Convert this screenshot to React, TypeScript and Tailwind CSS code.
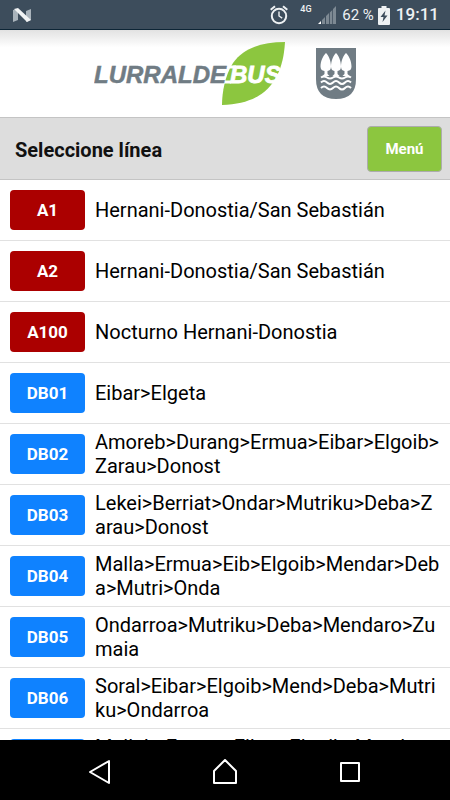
const lines = [
  { code: "A1", name: "Hernani-Donostia/San Sebastián", night: true },
  { code: "A2", name: "Hernani-Donostia/San Sebastián", night: true },
  { code: "A100", name: "Nocturno Hernani-Donostia", night: true },
  { code: "DB01", name: "Eibar>Elgeta" },
  { code: "DB02", name: "Amoreb>Durang>Ermua>Eibar>Elgoib>Zarau>Donost" },
  { code: "DB03", name: "Lekei>Berriat>Ondar>Mutriku>Deba>Zarau>Donost" },
  { code: "DB04", name: "Malla>Ermua>Eib>Elgoib>Mendar>Deba>Mutri>Onda" },
  { code: "DB05", name: "Ondarroa>Mutriku>Deba>Mendaro>Zumaia" },
  { code: "DB06", name: "Soral>Eibar>Elgoib>Mend>Deba>Mutriku>Ondarroa" },
  { code: "DB07", name: "Mallab>Ermua>Eibar>Elgoib>Mendar>Deba" },
];

function StatusBar() {
  return (
    <div className="flex h-[30px] shrink-0 items-center justify-between border-b border-[#0d2536] bg-[#3d4d5c] pt-px pr-[11px] pl-[13px] text-[#eef1f3]">
      <svg width="19" height="15" viewBox="0 0 19 15">
        <path d="M0 2l5-1v11l-5 2zM13 3l5-2v11l-5 2z" fill="#a9b3bb" />
        <path d="M1 1l4-1 13 12-4 2z" fill="#f1f3f4" />
      </svg>
      <div className="flex items-center">
        <svg className="mr-3" width="18" height="20" viewBox="0 0 18 20" fill="none" stroke="currentColor" strokeWidth="2">
          <circle cx="9" cy="11" r="7.2" />
          <path d="M.7 4.8L5 1.2M17.3 4.8L13 1.2" />
          <path d="M9 6.5V11l3.2 2.2" strokeWidth="1.4" />
        </svg>
        <span className="mb-3 w-[17px] text-[9px] leading-3 font-medium">4G</span>
        <svg className="mr-[6px]" width="19" height="18" viewBox="0 0 19 18">
          <path d="M1 18l3-3v3z" fill="#fff" />
          <path d="M5 14l3-3v7H5zM9 10l3-3v11H9zM12.800 6.500l2.500-2.500v14h-2.500zM16 3l3-3v18h-3z" fill="#7d8993" />
        </svg>
        <span className="text-[15px]">62 %</span>
        <svg className="mr-[6px] ml-1" width="12" height="19" viewBox="0 0 12 19">
          <path d="M3.500 0h5v2H11q1 0 1 1v15q0 1-1 1H1q-1 0-1-1V3q0-1 1-1h2.500z" fill="#eef1f3" />
          <path d="M7.500 4.500L2.500 11h3L4.500 16 9.500 9.500h-3z" fill="#3d4d5c" />
        </svg>
        <span className="text-[17px] font-medium">19:11</span>
      </div>
    </div>
  );
}

function Logo() {
  return (
    <svg role="img" aria-label="Lurraldebus" width="200" height="66" viewBox="0 0 200 66">
      <path d="M191 1C189 36 174 63 128 64C128 52 131 34 139 22C149 8 166 1 191 1Z" fill="#8cc63f" />
      <g fontFamily="'Liberation Sans', Arial, sans-serif" fontSize="24" fontWeight="700" fontStyle="italic">
        <path d="M136 26h6M129 41h8" stroke="#fff" strokeWidth="3" />
        <text x="136" y="42" fill="#fff" stroke="#fff" strokeWidth=".8">BUS</text>
        <text x="0" y="42" fill="#707c84" stroke="#707c84" strokeWidth=".5">LURRALDE</text>
      </g>
    </svg>
  );
}

function Crest() {
  return (
    <svg width="40" height="52" viewBox="0 0 40 52">
      <path d="M0 0h40v31q0 20-20 20T0 31z" fill="#707c84" />
      <g fill="#fff">
        <path d="M10 5C7.500 7 4.500 13 4.500 18.500q0 4 4 4.500v3l-2 2h7l-2-2v-3q3.500-.5 3.500-4.500C15 13 12.500 7 10 5z" />
        <path d="M20 5C17.500 7 15 13 15 18.500q0 4 3.500 4.500v3l-2 2h7l-2-2v-3q3.500-.5 3.500-4.500C25 13 22.500 7 20 5z" />
        <path d="M30 5C27.500 7 25 13 25 18.500q0 4 3.500 4.500v3l-2 2h7l-2-2v-3q4-.5 4-4.500C35.500 13 32.500 7 30 5z" />
      </g>
      <g fill="none" stroke="#fff" strokeWidth="2">
        <path d="M5 29.500q3-2 6 0t6 0 6 0 6 0 6 0M5 34.500q3-3 6 0t6 0 6 0 6 0 6 0M5 40q3-3 6 0t6 0 6 0 6 0 6 0" />
      </g>
    </svg>
  );
}

export default function App() {
  return (
    <div className="flex h-screen flex-col overflow-hidden bg-white font-[Roboto,sans-serif] text-black">
      <StatusBar />
      <header className="flex h-[87px] shrink-0 items-center justify-center gap-[22px] bg-linear-to-b from-[#e2e2e2] to-white to-20%">
        <Logo />
        <Crest />
      </header>
      <div className="flex h-[63px] shrink-0 items-center justify-between border-y border-[#c4c4c4] bg-[#ddd] pr-2 pl-[15px]">
        <h1 className="pt-0.5 text-xl font-bold text-[#111]">Seleccione línea</h1>
        <button type="button" className="h-[46px] w-[75px] rounded border border-[#acacac] bg-[#8cc63f] pt-0.5 text-[15px] font-bold text-white">
          Menú
        </button>
      </div>
      <ul className="min-h-0 flex-1 overflow-hidden">
        {lines.map((line) => (
          <li key={line.code} className="border-b border-[#e1e1e1]">
            <a href="#" className="flex h-[60px] items-center gap-[10px] px-[10px]">
              <span
                className={`flex h-10 w-[75px] shrink-0 items-center justify-center rounded pt-0.5 text-[17px] font-bold text-white ${
                  line.night ? "bg-[#ab0000]" : "bg-[#0f82ff]"
                }`}
              >
                {line.code}
              </span>
              <span className="text-xl leading-6 break-all">{line.name}</span>
            </a>
          </li>
        ))}
      </ul>
      <nav className="flex h-[60px] shrink-0 items-center justify-center gap-[101px] bg-black pt-[3px] text-white">
        <button type="button" aria-label="Atrás">
          <svg width="24" height="26" viewBox="0 0 24 26" fill="none" stroke="currentColor" strokeWidth="2" strokeLinejoin="round">
            <path d="M21 2v22L2 13z" />
          </svg>
        </button>
        <button type="button" aria-label="Inicio">
          <svg width="26" height="26" viewBox="0 0 26 26" fill="none" stroke="currentColor" strokeWidth="2" strokeLinejoin="round">
            <path d="M1 12L12 1l11 11v12H1z" />
          </svg>
        </button>
        <button type="button" aria-label="Recientes">
          <svg width="22" height="22" viewBox="0 0 22 22" fill="none" stroke="currentColor" strokeWidth="2" strokeLinejoin="round">
            <path d="M1 2h18v18H1z" />
          </svg>
        </button>
      </nav>
    </div>
  );
}
